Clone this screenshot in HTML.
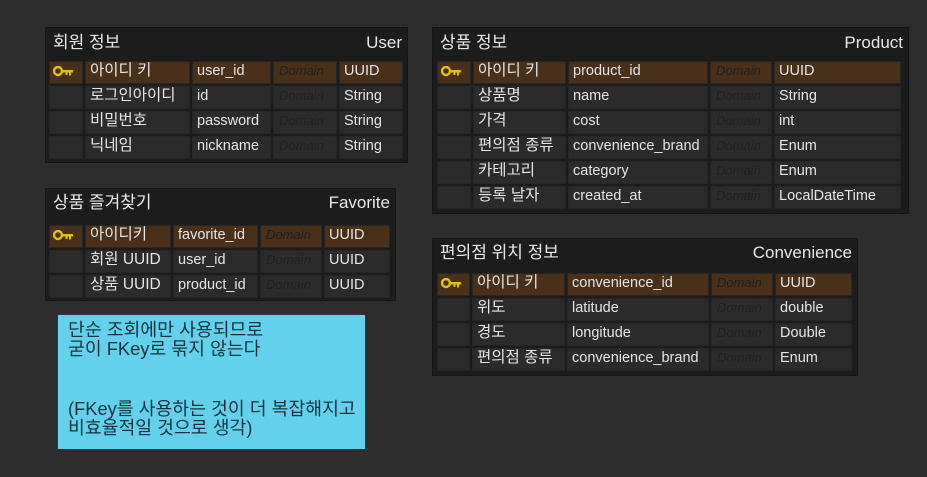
<html><head><style>
body{margin:0;width:927px;height:477px;background:#2d2d2d;position:relative;overflow:hidden;font-family:"Liberation Sans","Noto Sans CJK KR",sans-serif;}
.t{position:absolute;background:#1c1c1c;border:1px solid #151515;}
.h{position:absolute;top:3px;left:7px;right:5px;height:24px;color:#e8e8e8;font-size:17px;line-height:24px;}
.h span{position:absolute;right:0;top:0}
.g{position:absolute;display:grid;column-gap:2px;row-gap:2px;grid-auto-rows:23px;font-size:14.5px;color:#e6e6e6;}
.g div{background:#2b2b2b;line-height:20px;padding-left:5px;white-space:nowrap;overflow:hidden;box-shadow:inset 0 0 0 1px #262626}
.g .p{background:#4a2f19}
.g .d{color:#1f1f1f;font-style:italic;font-size:13px;padding-left:6px}
.ko{font-size:15.5px}
.k{position:relative}
.k svg{position:absolute;left:4px;top:5px}
.note{position:absolute;left:57px;top:314px;width:307px;height:134px;background:#64d1ec;border:1px solid #333;color:#17323a;font-size:18.3px;line-height:19px;}
</style></head><body>
<svg width="0" height="0" style="position:absolute"><defs><g id="key"><circle cx="5" cy="5" r="4" fill="none" stroke="#e0c020" stroke-width="2.4"/><path d="M9 4h11v2.5h-2v3h-2v-3h-1.5v2.5h-2v-2.5H9z" fill="#e0c020"/></g></defs></svg>

<div class="t" style="left:45px;top:27px;width:361px;height:134px">
<div class="h">회원 정보<span>User</span></div></div>
<div class="g" style="left:49px;top:61px;grid-template-columns:34px 105px 79px 64px 64px">
<div class="p k"><svg width="22" height="11"><use href="#key"/></svg></div><div class="p ko">아이디 키</div><div class="p">user_id</div><div class="p d">Domain</div><div class="p">UUID</div>
<div></div><div class="ko">로그인아이디</div><div>id</div><div class="d">Domain</div><div>String</div>
<div></div><div class="ko">비밀번호</div><div>password</div><div class="d">Domain</div><div>String</div>
<div></div><div class="ko">닉네임</div><div>nickname</div><div class="d">Domain</div><div>String</div>
</div>

<div class="t" style="left:432px;top:27px;width:475px;height:185px">
<div class="h">상품 정보<span>Product</span></div></div>
<div class="g" style="left:437px;top:61px;grid-template-columns:34px 93px 140px 62px 127px">
<div class="p k"><svg width="22" height="11"><use href="#key"/></svg></div><div class="p ko">아이디 키</div><div class="p">product_id</div><div class="p d">Domain</div><div class="p">UUID</div>
<div></div><div class="ko">상품명</div><div>name</div><div class="d">Domain</div><div>String</div>
<div></div><div class="ko">가격</div><div>cost</div><div class="d">Domain</div><div>int</div>
<div></div><div class="ko">편의점 종류</div><div>convenience_brand</div><div class="d">Domain</div><div>Enum</div>
<div></div><div class="ko">카테고리</div><div>category</div><div class="d">Domain</div><div>Enum</div>
<div></div><div class="ko">등록 날자</div><div>created_at</div><div class="d">Domain</div><div>LocalDateTime</div>
</div>

<div class="t" style="left:45px;top:188px;width:349px;height:111px">
<div class="h" style="top:2px">상품 즐겨찾기<span>Favorite</span></div></div>
<div class="g" style="left:49px;top:225px;grid-template-columns:34px 86px 85px 62px 66px">
<div class="p k"><svg width="22" height="11"><use href="#key"/></svg></div><div class="p ko">아이디키</div><div class="p">favorite_id</div><div class="p d">Domain</div><div class="p">UUID</div>
<div></div><div class="ko">회원 UUID</div><div>user_id</div><div class="d">Domain</div><div>UUID</div>
<div></div><div class="ko">상품 UUID</div><div>product_id</div><div class="d">Domain</div><div>UUID</div>
</div>

<div class="t" style="left:432px;top:238px;width:424px;height:136px">
<div class="h" style="top:2px">편의점 위치 정보<span>Convenience</span></div></div>
<div class="g" style="left:437px;top:273px;grid-template-columns:33px 93px 142px 62px 77px">
<div class="p k"><svg width="22" height="11"><use href="#key"/></svg></div><div class="p ko">아이디 키</div><div class="p">convenience_id</div><div class="p d">Domain</div><div class="p">UUID</div>
<div></div><div class="ko">위도</div><div>latitude</div><div class="d">Domain</div><div>double</div>
<div></div><div class="ko">경도</div><div>longitude</div><div class="d">Domain</div><div>Double</div>
<div></div><div class="ko">편의점 종류</div><div>convenience_brand</div><div class="d">Domain</div><div>Enum</div>
</div>

<div class="note">
<div style="position:absolute;left:10px;top:5px">단순 조회에만 사용되므로<br>굳이 FKey로 묶지 않는다</div>
<div style="position:absolute;left:10px;top:84px">(FKey를 사용하는 것이 더 복잡해지고<br>비효율적일 것으로 생각)</div>
</div>
</body></html>
